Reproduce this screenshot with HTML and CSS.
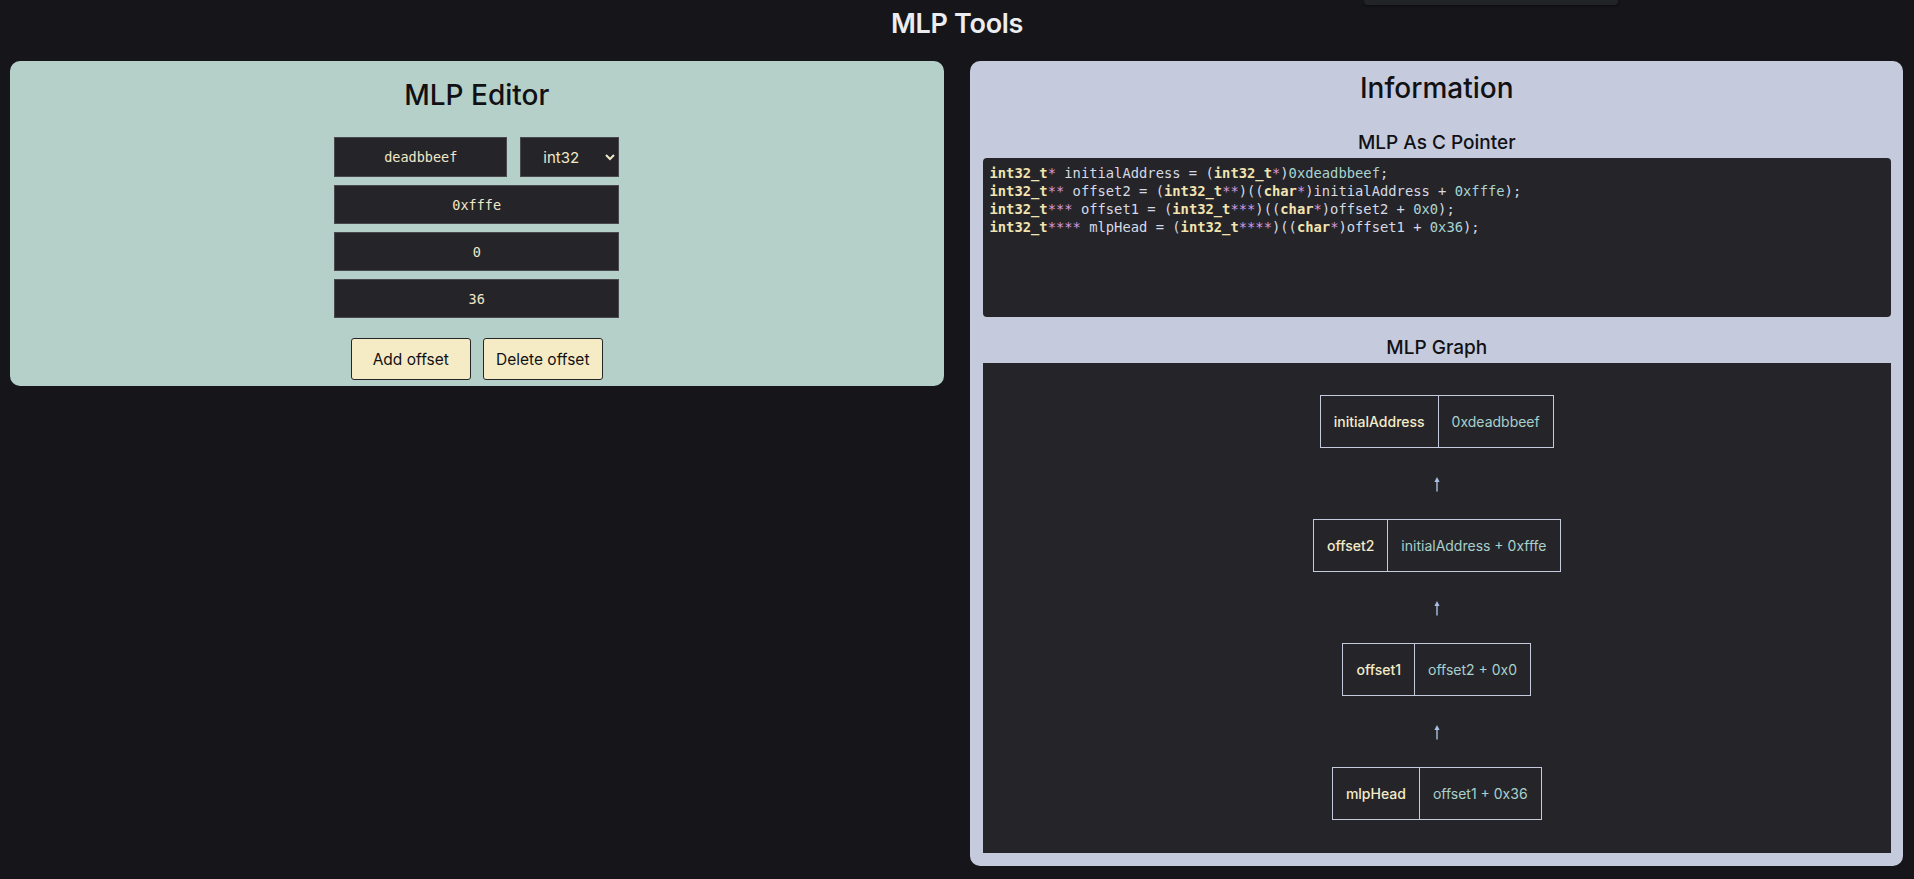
FILE: index.html
```html
<!DOCTYPE html>
<html lang="en">
<head>
<meta charset="utf-8">
<title>MLP Tools</title>
<link rel="stylesheet" href="styles.css">
</head>
<body>
<div class="popup-edge"></div>
<h1 class="app-title">MLP Tools</h1>
<main class="layout">
  <section class="panel editor">
    <h2 class="panel-title">MLP Editor</h2>
    <div class="fields">
      <div class="row">
        <input class="field field-base" type="text" value="deadbbeef">
        <select class="type-select">
          <option>int32</option>
        </select>
      </div>
      <input class="field" type="text" value="0xfffe">
      <input class="field" type="text" value="0">
      <input class="field" type="text" value="36">
    </div>
    <div class="actions">
      <button class="btn">Add offset</button>
      <button class="btn">Delete offset</button>
    </div>
  </section>

  <section class="panel info">
    <h2 class="panel-title info-title">Information</h2>
    <h3 class="sub-title first">MLP As C Pointer</h3>
    <pre class="code"><span class="ty">int32_t</span><span class="st">*</span> initialAddress = (<span class="ty">int32_t</span><span class="st">*</span>)<span class="nu">0xdeadbbeef</span>;
<span class="ty">int32_t</span><span class="st">**</span> offset2 = (<span class="ty">int32_t</span><span class="st">**</span>)((<span class="ty">char</span><span class="st">*</span>)initialAddress + <span class="nu">0xfffe</span>);
<span class="ty">int32_t</span><span class="st">***</span> offset1 = (<span class="ty">int32_t</span><span class="st">***</span>)((<span class="ty">char</span><span class="st">*</span>)offset2 + <span class="nu">0x0</span>);
<span class="ty">int32_t</span><span class="st">****</span> mlpHead = (<span class="ty">int32_t</span><span class="st">****</span>)((<span class="ty">char</span><span class="st">*</span>)offset1 + <span class="nu">0x36</span>);</pre>
    <h3 class="sub-title">MLP Graph</h3>
    <div class="graph">
      <div class="node"><span class="cell name">initialAddress</span><span class="cell expr">0xdeadbbeef</span></div>
      <div class="link"><svg width="8" height="16" viewBox="0 0 8 16"><path d="M4 15.5V4" stroke="#a9c0e4" stroke-width="1.4"/><path d="M4 1 L6.6 6 L1.4 6 Z" fill="#a9c0e4"/></svg></div>
      <div class="node"><span class="cell name">offset2</span><span class="cell expr">initialAddress + 0xfffe</span></div>
      <div class="link"><svg width="8" height="16" viewBox="0 0 8 16"><path d="M4 15.5V4" stroke="#a9c0e4" stroke-width="1.4"/><path d="M4 1 L6.6 6 L1.4 6 Z" fill="#a9c0e4"/></svg></div>
      <div class="node"><span class="cell name">offset1</span><span class="cell expr">offset2 + 0x0</span></div>
      <div class="link"><svg width="8" height="16" viewBox="0 0 8 16"><path d="M4 15.5V4" stroke="#a9c0e4" stroke-width="1.4"/><path d="M4 1 L6.6 6 L1.4 6 Z" fill="#a9c0e4"/></svg></div>
      <div class="node"><span class="cell name">mlpHead</span><span class="cell expr">offset1 + 0x36</span></div>
    </div>
  </section>
</main>
</body>
</html>
```

FILE: styles.css
```css
* { box-sizing: border-box; }

html, body {
  margin: 0;
  padding: 0;
  background: #16161a;
  font-family: "Inter", "Liberation Sans", sans-serif;
  color: #e8e8ec;
  height: 879px;
  overflow: hidden;
}

.popup-edge {
  position: absolute;
  left: 1364px;
  top: 0;
  width: 254px;
  height: 5px;
  background: #222327;
  border-radius: 0 0 4px 4px;
  box-shadow: 0 1px 3px rgba(0,0,0,0.5);
}

.app-title {
  margin: 0 0 13px;
  height: 48px;
  line-height: 48px;
  font-size: 27px;
  font-weight: 600;
  text-align: center;
  color: #ecedf0;
  letter-spacing: -0.3px;
}

.layout {
  display: grid;
  grid-template-columns: minmax(0, 1fr) minmax(0, 1fr);
  gap: 26px;
  padding: 0 11px 0 10px;
  align-items: start;
}

.panel {
  border-radius: 10px;
}

.editor {
  background: #b4d0c8;
  padding: 17px 0 6px;
  display: flex;
  flex-direction: column;
  align-items: center;
}

.info {
  background: #c5cadd;
  padding: 10px 12px 13px 13px;
  display: flex;
  flex-direction: column;
}

.panel-title {
  margin: 0;
  font-size: 28px;
  line-height: 34px;
  font-weight: 500;
  color: #111114;
  text-align: center;
}

.fields {
  margin-top: 25px;
  width: 285px;
  display: flex;
  flex-direction: column;
  gap: 8px;
}

.row {
  display: flex;
  gap: 13px;
}

.field {
  height: 39px;
  width: 100%;
  background: #252529;
  border: 1px solid #48484d;
  border-radius: 0;
  color: #f1e8c8;
  font-family: "DejaVu Sans Mono", "Liberation Mono", monospace;
  font-size: 13.5px;
  text-align: center;
  padding: 0;
  outline: none;
}

.field-base {
  width: 173px;
  flex: none;
  height: 40px;
}

.type-select {
  width: 99px;
  height: 40px;
  background: #252529;
  border: 1px solid #48484d;
  border-radius: 0;
  color: #f1e8c8;
  font-family: "Inter", "Liberation Sans", sans-serif;
  font-size: 15px;
  padding: 0 0 0 18px;
}

.actions {
  margin-top: 20px;
  display: flex;
  gap: 12px;
}

.btn {
  width: 120px;
  height: 42px;
  background: #f5ebc5;
  border: 1px solid #26262a;
  border-radius: 3px;
  color: #111114;
  font-family: "Inter", "Liberation Sans", sans-serif;
  font-size: 15.5px;
  padding: 0;
}

.sub-title {
  margin: 19px 0 3px;
  font-size: 19px;
  line-height: 24px;
  font-weight: 500;
  text-align: center;
  color: #111114;
}

.sub-title.first {
  margin-top: 26px;
}

.code {
  margin: 0;
  height: 159px;
  background: #252529;
  border-radius: 4px;
  padding: 6px 7px;
  font-family: "DejaVu Sans Mono", "Liberation Mono", monospace;
  font-size: 13.8px;
  line-height: 18px;
  color: #d6d9e6;
}

.ty { color: #f2e4b0; font-weight: 600; }
.st { color: #d49ade; }
.nu { color: #a9d4d1; }

.graph {
  background: #252529;
  height: 490px;
  padding: 32px 0;
  display: flex;
  flex-direction: column;
  align-items: center;
}

.node {
  display: flex;
  height: 53px;
  border: 1px solid #c5cadd;
}

.cell {
  display: flex;
  align-items: center;
  padding: 0 13px;
  font-size: 14px;
}

.name {
  color: #f4ebc9;
  font-weight: 500;
  border-right: 1px solid #c5cadd;
}

.expr {
  color: #a8d0cd;
}

.link {
  height: 71px;
  display: flex;
  align-items: center;
  justify-content: center;
}

.link svg { display: block; }
```
